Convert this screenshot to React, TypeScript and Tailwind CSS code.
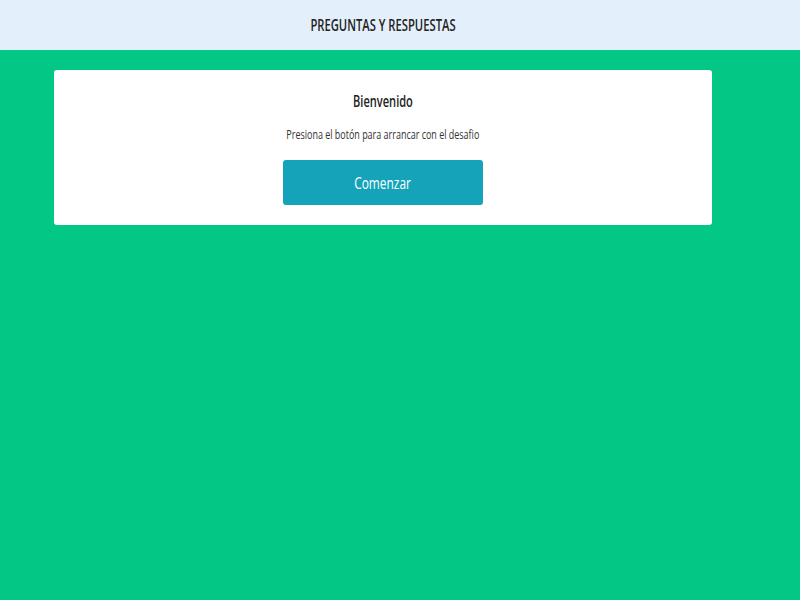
export default function App() {
  return (
    <div className="min-h-screen w-[800px] h-[600px] bg-[#02c785] font-['Open_Sans',sans-serif] text-[#212529]">
      <header className="h-[50px] bg-[#e3f0fb] w-[800px]">
        <div className="w-[766px] h-full flex items-center justify-center">
          <span className="inline-block scale-x-[0.66] text-[17px] font-semibold text-[#222]">
            PREGUNTAS Y RESPUESTAS
          </span>
        </div>
      </header>
      <div className="w-[766px] px-[54px] pt-[20px]">
        <div className="bg-white rounded-[3px] h-[155px] flex flex-col items-center pt-[20px]">
          <h1 className="inline-block scale-x-[0.65] text-[17px] font-semibold text-[#222] leading-[22px]">Bienvenido</h1>
          <p className="inline-block scale-x-[0.69] text-[13px] text-[#333] mt-[13px] leading-[18px]">
            Presiona el botón para arrancar con el desafio
          </p>
          <button className="mt-[17px] w-[200px] h-[45px] rounded-[3px] bg-[#14a3b9] text-white">
            <span className="inline-block scale-x-[0.7] text-[17px]">Comenzar</span>
          </button>
        </div>
      </div>
    </div>
  )
}
